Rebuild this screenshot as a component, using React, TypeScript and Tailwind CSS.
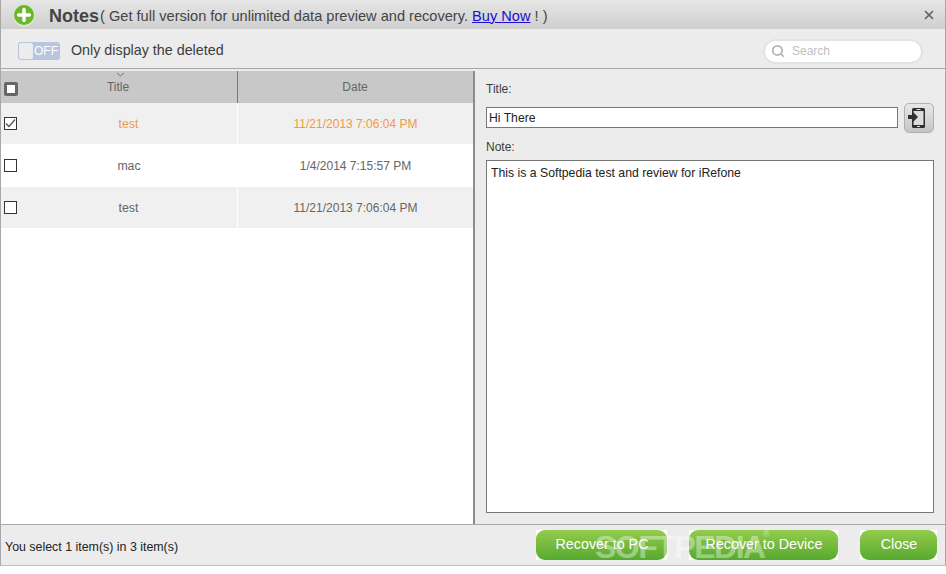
import { Search, X } from "lucide-react";

const rows = [
  { title: "test", date: "11/21/2013 7:06:04 PM", checked: true, shaded: true },
  { title: "mac", date: "1/4/2014 7:15:57 PM", checked: false, shaded: false },
  { title: "test", date: "11/21/2013 7:06:04 PM", checked: false, shaded: true },
];

function AddIcon() {
  return (
    <svg width="24" height="24" viewBox="0 0 24 24" aria-hidden="true">
      <circle cx="12" cy="12" r="11.5" fill="#d9e8c8" />
      <circle cx="12" cy="12" r="10" fill="#6cb62e" />
      <path d="M12 6.500v11M6.500 12h11" stroke="#fff" strokeWidth="3.400" strokeLinecap="round" />
    </svg>
  );
}

function PhoneIcon() {
  return (
    <svg width="22" height="24" viewBox="0 0 22 24" aria-hidden="true">
      <rect x="4" y="2" width="13" height="20" rx="1.500" fill="#2f2f2f" />
      <rect x="5.500" y="5" width="10" height="14" fill="#dcdcdc" />
      <path d="M8.500 3.500h4" stroke="#ddd" />
      <rect x="9" y="20" width="3" height="1" fill="#ddd" />
      <path d="M0 9h5V6l5 5-5 5v-3H0z" fill="#2f2f2f" />
    </svg>
  );
}

function Checkbox({ checked }: { checked: boolean }) {
  return (
    <div className="flex h-[13px] w-[13px] items-center justify-center border border-[#333] bg-white">
      {checked && (
        <svg width="11" height="11" viewBox="0 0 11 11" aria-hidden="true">
          <path d="M1 5.500l3 3 6-7" fill="none" stroke="#555" strokeWidth="1.300" />
        </svg>
      )}
    </div>
  );
}

function GreenButton({ label, width }: { label: string; width: string }) {
  return (
    <button type="button" className={`h-[30px] bg-white ${width}`}>
      <span className="flex h-full w-full items-center justify-center rounded-[9px] bg-gradient-to-b from-[#93cc4c] to-[#56a92f] pl-[1px] text-[14.300px] text-white">
        {label}
      </span>
    </button>
  );
}

export default function App() {
  return (
    <div className="relative h-[574px] w-[946px] overflow-hidden bg-white font-['Liberation_Sans',Arial,sans-serif]">
      <div className="flex h-[566px] flex-col border-x border-b border-x-[#a8a8a8] border-b-[#bdbdbd] bg-[#ececec]">
        <header className="flex h-[29px] shrink-0 items-center bg-gradient-to-b from-[#e6e6e6] to-[#cfcfcf] pl-[11px] pr-[9px]">
          <AddIcon />
          <span className="ml-[13px] mt-[4px] text-[18px] font-bold text-[#444]">Notes</span>
          <span className="ml-px mt-[4px] text-[14.600px] text-[#444]">
            ( Get full version for unlimited data preview and recovery.{" "}
            <a href="#buy" className="text-[#1a0dd6] underline">
              Buy Now
            </a>{" "}
            ! )
          </span>
          <X className="ml-auto text-[#666]" size={14} strokeWidth={3} />
        </header>

        <div className="flex h-[40px] shrink-0 items-center border-b border-[#a8a8a8] pl-[17px] pr-[22px] pt-[5px]">
          <div className="flex h-[18px] w-[42px] items-center justify-between rounded-[3px] bg-[#b9c4de] pr-[2px]">
            <div className="h-[18px] w-[16px] rounded-[3px] border border-[#b9c4de] bg-[#ececec]" />
            <span className="text-[12px] text-white">OFF</span>
          </div>
          <span className="ml-[11px] text-[14.300px] text-[#3c3c3c]">Only display the deleted</span>
          <div className="ml-auto flex h-[25px] w-[160px] items-center rounded-full border-2 border-[#dfe4ea] bg-white pl-[6px]">
            <Search className="text-[#b4b4b4]" size={14} strokeWidth={3} />
            <span className="ml-[7px] text-[12px] text-[#c0c0c0]">Search</span>
          </div>
        </div>

        <div className="flex min-h-0 flex-1 pt-[2px]">
          <section className="flex w-[472px] shrink-0 flex-col bg-white">
            <div className="flex h-[32px] shrink-0 bg-[#c8c8c8] text-[12px] text-[#666]">
              <div className="relative flex w-[237px] shrink-0 items-center justify-center border-r border-[#777] pr-[2px]">
                <div className="absolute left-[3px] top-[11px] flex h-[14px] w-[14px] items-center justify-center rounded-[2px] bg-[#666]">
                  <div className="h-[8px] w-[8px] bg-white" />
                </div>
                <svg className="absolute left-[115px] top-[1px]" width="9" height="5" viewBox="0 0 9 5" aria-hidden="true">
                  <path d="M1 1l3.500 3L8 1" fill="none" stroke="#777" />
                </svg>
                Title
              </div>
              <div className="flex flex-1 items-center justify-center pr-[1px]">Date</div>
            </div>
            {rows.map((row, i) => (
              <div
                key={i}
                className={`flex items-center text-[12px] ${i === 1 ? "h-[43px]" : "h-[41px]"} ${
                  row.shaded ? "bg-[#f0f0f0]" : "bg-white"
                } ${row.checked ? "text-[#f39a3e]" : "text-[#666]"}`}
              >
                <div className={`flex h-full w-[237px] shrink-0 items-center pl-[3px] ${row.shaded ? "border-r border-white" : ""}`}>
                  <Checkbox checked={row.checked} />
                  <span className="flex-1 pl-[3px] pt-[1px] text-center text-[12.300px]">{row.title}</span>
                </div>
                <span className="flex-1 text-center">{row.date}</span>
              </div>
            ))}
          </section>

          <section className="flex min-w-0 flex-1 flex-col border-l-2 border-[#8c8c8c] pl-[11px] pr-[11px]">
            <label className="mt-[11px] text-[12px] leading-[14px] text-[#3c3c3c]">Title:</label>
            <div className="mt-[7px] flex items-start">
              <div className="mt-[4px] flex h-[21px] w-[412px] items-center border border-[#777] bg-white pl-[2px] pt-[1px] text-[12.200px] text-[#222]">
                Hi There
              </div>
              <button
                type="button"
                className="ml-[6px] flex h-[30px] w-[30px] items-center justify-center rounded-[5px] border border-[#b0b0b0] bg-gradient-to-b from-[#e8e8e8] to-[#c4c4c4]"
              >
                <PhoneIcon />
              </button>
            </div>
            <label className="mt-[7px] text-[12px] leading-[14px] text-[#3c3c3c]">Note:</label>
            <div className="mb-[11px] mt-[6px] flex-1 border border-[#777] bg-white px-[4px] py-[5px] text-[12.250px] leading-[14px] text-[#222]">
              This is a Softpedia test and review for iRefone
            </div>
          </section>
        </div>

        <footer className="flex h-[41px] shrink-0 items-center border-t border-[#a8a8a8] pl-[4px] pr-[8px]">
          <span className="mt-[4px] text-[12.400px] text-[#222]">You select 1 item(s) in 3 item(s)</span>
          <div className="ml-auto flex gap-[22px]">
            <GreenButton label="Recover to PC" width="w-[131px]" />
            <GreenButton label="Recover to Device" width="w-[149px]" />
            <GreenButton label="Close" width="w-[77px]" />
          </div>
        </footer>
      </div>

      <span className="pointer-events-none absolute left-[595px] top-[530px] text-[32px] font-bold leading-[34px] tracking-[-1.500px] text-white/40">
        SOFTPEDIA
      </span>
      <span className="pointer-events-none absolute left-[763px] top-[529px] text-[9px] leading-[10px] text-white/50">®</span>
    </div>
  );
}
